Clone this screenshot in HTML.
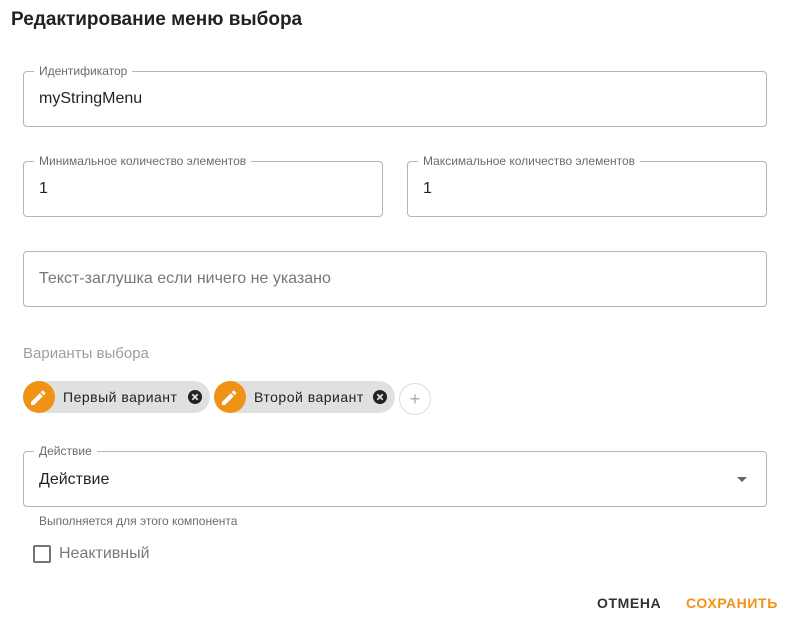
<!DOCTYPE html>
<html><head><meta charset="utf-8"><style>
body{margin:0;width:791px;height:623px;background:#fff;font-family:"Liberation Sans",sans-serif;position:relative;overflow:hidden;color:rgba(0,0,0,.87)}
.a{position:absolute}
.f{position:absolute;border:1px solid #b5b5b5;border-radius:4px;box-sizing:border-box}
.lb{position:absolute;top:-8px;left:10px;background:#fff;padding:0 5px;font-size:12px;color:#6b6b6b;line-height:14px;white-space:nowrap}
.v{position:absolute;left:15px;font-size:16px;line-height:20px}
.chip{position:absolute;top:381px;height:32px;background:#e0e0e0;border-radius:16px}
.ci{position:absolute;left:0;top:0;width:32px;height:32px;border-radius:50%;background:#ef9316}
.ct{position:absolute;left:40px;top:8px;font-size:14px;line-height:16px;color:#222;letter-spacing:.5px}
.x{position:absolute;top:8px;width:16px;height:16px}
</style></head><body>
<div class="a" style="left:11px;top:9px;font-size:19px;line-height:22px;font-weight:bold;color:#222">Редактирование меню выбора</div>

<div class="f" style="left:23px;top:71px;width:744px;height:56px"><div class="lb">Идентификатор</div><div class="v" style="top:17px">myStringMenu</div></div>

<div class="f" style="left:23px;top:161px;width:360px;height:56px"><div class="lb">Минимальное количество элементов</div><div class="v" style="top:17px">1</div></div>
<div class="f" style="left:407px;top:161px;width:360px;height:56px"><div class="lb">Максимальное количество элементов</div><div class="v" style="top:17px">1</div></div>

<div class="f" style="left:23px;top:251px;width:744px;height:56px"><div class="v" style="top:17px;color:#777">Текст-заглушка если ничего не указано</div></div>

<div class="a" style="left:23px;top:345px;font-size:15px;line-height:18px;color:#9e9e9e">Варианты выбора</div>

<div class="chip" style="left:23px;width:187px"><div class="ci"><svg width="32" height="32" viewBox="0 0 32 32"><path d="M8 21v3h3l8.8-8.8-3-3zM22.2 12.8a.8.8 0 000-1.1l-1.9-1.9a.8.8 0 00-1.1 0l-1.5 1.5 3 3z" fill="#fff"/></svg></div><div class="ct">Первый вариант</div><svg class="x" style="left:164px" viewBox="0 0 16 16"><circle cx="8" cy="8" r="7" fill="#222"/><path d="M5.3 5.3l5.4 5.4M10.7 5.3l-5.4 5.4" stroke="#e0e0e0" stroke-width="1.8"/></svg></div>
<div class="chip" style="left:214px;width:181px"><div class="ci"><svg width="32" height="32" viewBox="0 0 32 32"><path d="M8 21v3h3l8.8-8.8-3-3zM22.2 12.8a.8.8 0 000-1.1l-1.9-1.9a.8.8 0 00-1.1 0l-1.5 1.5 3 3z" fill="#fff"/></svg></div><div class="ct">Второй вариант</div><svg class="x" style="left:158px" viewBox="0 0 16 16"><circle cx="8" cy="8" r="7" fill="#222"/><path d="M5.3 5.3l5.4 5.4M10.7 5.3l-5.4 5.4" stroke="#e0e0e0" stroke-width="1.8"/></svg></div>
<div class="a" style="left:399px;top:383px;width:30px;height:30px;border:1px solid #ddd;border-radius:50%;text-align:center;line-height:30px;color:#aaa;font-size:18px">+</div>

<div class="f" style="left:23px;top:451px;width:744px;height:56px"><div class="lb">Действие</div><div class="v" style="top:18px">Действие</div><div class="a" style="right:19px;top:25px;width:0;height:0;border-left:5px solid transparent;border-right:5px solid transparent;border-top:5px solid #666"></div></div>
<div class="a" style="left:39px;top:514px;font-size:12px;color:#6b6b6b;line-height:14px">Выполняется для этого компонента</div>

<div class="a" style="left:33px;top:545px;width:14px;height:14px;border:2px solid #757575;border-radius:2px"></div>
<div class="a" style="left:59px;top:544px;font-size:16px;line-height:19px;color:#7a7a7a">Неактивный</div>

<div class="a" style="left:597px;top:595px;font-size:14px;font-weight:bold;letter-spacing:.6px;color:#333;line-height:16px">ОТМЕНА</div>
<div class="a" style="left:686px;top:595px;font-size:14px;font-weight:bold;letter-spacing:.6px;color:#ef9316;line-height:16px">СОХРАНИТЬ</div>
</body></html>
